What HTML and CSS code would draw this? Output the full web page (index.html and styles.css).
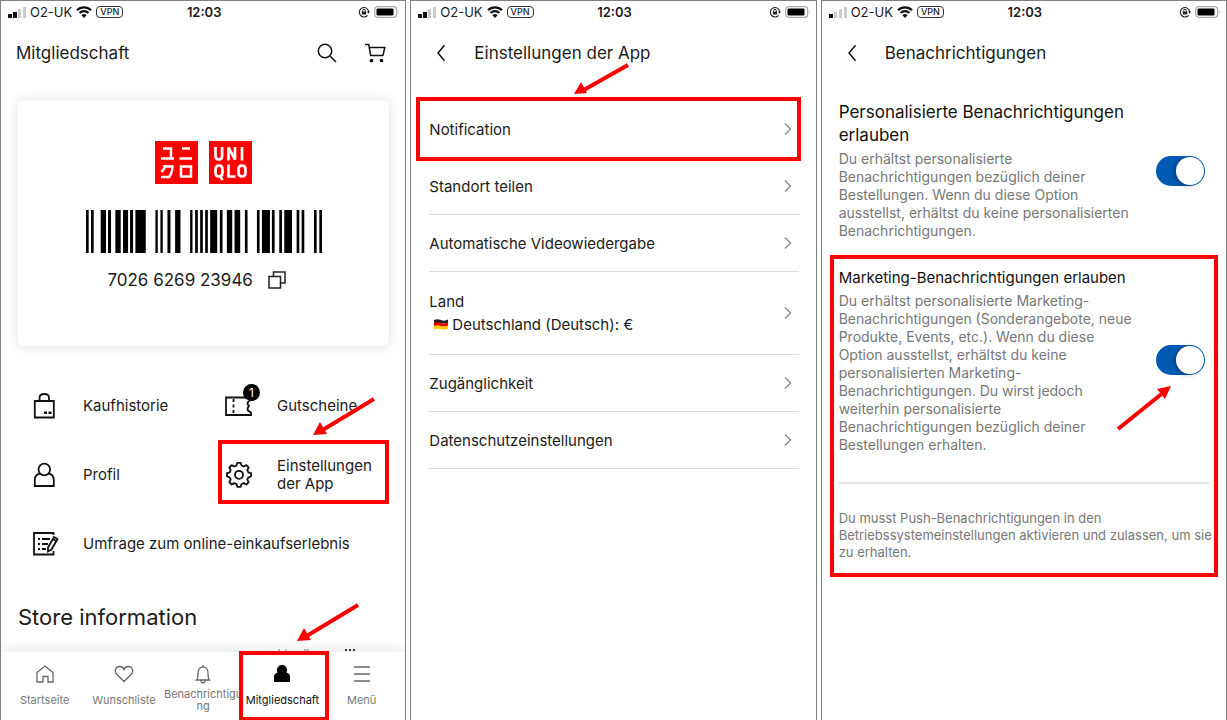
FILE: index.html
```html
<!DOCTYPE html>
<html lang="de">

<head>
    <meta charset="UTF-8">
    <meta name="viewport" content="width=device-width, initial-scale=1.0">
    <title>Mitgliedschaft</title>
    <link rel="stylesheet" href="styles.css">
</head>

<body>

    <!-- shared icons -->
    <svg class="sprite" aria-hidden="true">
        <symbol id="wifi" viewBox="0 0 16 12">
            <path d="M1 4.3a10 10 0 0 1 14 0M3.5 7a6.4 6.4 0 0 1 9 0" fill="none" stroke="#111" stroke-width="2.2" />
            <path d="M8 12 5.4 9.3a3.7 3.7 0 0 1 5.2 0z" fill="#111" />
        </symbol>
        <symbol id="lock" viewBox="0 0 12 12">
            <path d="M9.6 9.3A4.7 4.7 0 1 1 10.7 6" fill="none" stroke="#222" stroke-width="1.1" />
            <path d="M9 5.4h3L10.5 7.8zM3.8 5.6h4.4v3H3.8z" fill="#222" />
            <path d="M4.7 5.8V4.6a1.3 1.3 0 0 1 2.6 0v1.2" fill="none" stroke="#222" />
        </symbol>
        <symbol id="battery" viewBox="0 0 26 12">
            <rect x=".7" y=".7" width="22" height="10.6" rx="3" fill="#fff" stroke="#aaa" stroke-width="1.2" />
            <rect x="2.5" y="2.4" width="17" height="7.2" rx="1.3" fill="#000" />
            <path d="M24.2 4.2q1.4 1.8 0 3.6z" fill="#aaa" />
        </symbol>
        <symbol id="back" viewBox="0 0 10 18">
            <path d="M8.5 1.2 2 9l6.5 7.8" fill="none" stroke="#111" stroke-width="1.5" />
        </symbol>
        <symbol id="next" viewBox="0 0 8 14">
            <path d="M1 1.5 6.5 7 1 12.5" fill="none" stroke="#888" stroke-width="1.4" />
        </symbol>
    </svg>

    <div class="screens">

        <!-- Mitgliedschaft -->
        <section class="phone">
            <div class="status">
                <div class="status__left">
                    <svg class="status__signal" viewBox="0 0 18 11"><path d="M0 7h4v4H0zM5 5h4v6H5z" fill="#111" /><path d="M10 2h3v9h-3zM15 0h3v11h-3z" fill="#ccc" /></svg>
                    <span>O2-UK</span>
                    <svg class="status__wifi"><use href="#wifi" /></svg>
                    <span class="status__vpn">VPN</span>
                </div>
                <b class="status__time">12:03</b>
                <div class="status__right">
                    <svg class="status__lock"><use href="#lock" /></svg>
                    <svg class="status__battery"><use href="#battery" /></svg>
                </div>
            </div>

            <header class="header header--home">
                <h1 class="header__title">Mitgliedschaft</h1>
                <button class="icon-button" aria-label="Suche">
                    <svg width="20" height="20" viewBox="0 0 20 20" fill="none" stroke="#111" stroke-width="1.5"><circle cx="8" cy="8" r="6.7" /><path d="m13 13 6 6" /></svg>
                </button>
                <button class="icon-button" aria-label="Warenkorb">
                    <svg width="21" height="20" viewBox="0 0 21 20" fill="none" stroke="#111" stroke-width="1.5"><path d="M0 1.500h3.700L5.700 12.500h12.300M4.300 4.500h15.500l-1.800 8" /><circle cx="6.500" cy="17.500" r="1.100" fill="#111" /><circle cx="16.500" cy="17.500" r="1.100" fill="#111" /></svg>
                </button>
            </header>

            <main class="member">
                <div class="card">
                    <div class="card__logos">
                        <svg class="logo" viewBox="0 0 43 43" role="img" aria-label="ユニクロ">
                            <path d="M0 0h43v43H0z" fill="#f00" />
                            <path d="M8 7.500h8v10M6 17.500h13M27 7.500h8M24.500 17.500h12.500M9.500 24v3L6.500 31M8.500 25.500h9Q17 33 14 36H6M26 25.500h10v10h-10z" fill="none" stroke="#fff" stroke-width="2.500" />
                        </svg>
                        <svg class="logo" viewBox="0 0 43 43" role="img" aria-label="UNIQLO">
                            <path d="M0 0h43v43H0z" fill="#f00" />
                            <path d="M6.500 6v9q0 3.500 3.300 3.500t3.300-3.500V6M19.500 19.500V6.500l6.500 12V6M33 6v13.500M10 24.500q3.500 0 3.500 4v3q0 4-3.500 4t-3.500-4v-3q0-4 3.500-4zM10.500 34l3 5M19.500 23.500v12h7M33 24.500q3.500 0 3.500 4v3q0 4-3.500 4t-3.500-4v-3q0-4 3.500-4z" fill="none" stroke="#fff" stroke-width="2.700" />
                        </svg>
                    </div>
                    <svg class="card__barcode" viewBox="0 0 707 128" preserveAspectRatio="none" role="img" aria-label="Barcode">
                        <path d="M0 0h8v128h-8zM15 0h8v128h-8zM44 0h16v128h-16zM66 0h9v128h-9zM88 0h16v128h-16zM111 0h15v128h-15zM132 0h9v128h-9zM148 0h31v128h-31zM208 0h7v128h-7zM223 0h7v128h-7zM244 0h9v128h-9zM267 0h16v128h-16zM312 0h7v128h-7zM327 0h8v128h-8zM342 0h8v128h-8zM357 0h8v128h-8zM372 0h21v128h-21zM401 0h8v128h-8zM422 0h16v128h-16zM445 0h17v128h-17zM476 0h8v128h-8zM512 0h8v128h-8zM527 0h24v128h-24zM557 0h8v128h-8zM579 0h8v128h-8zM594 0h23v128h-23zM631 0h8v128h-8zM646 0h8v128h-8zM683 0h8v128h-8zM699 0h8v128h-8z" />
                    </svg>
                    <div class="card__number">
                        <span>7026 6269 23946</span>
                        <button class="icon-button" aria-label="Kopieren">
                            <svg width="18" height="18" viewBox="0 0 18 18" fill="none" stroke="#222" stroke-width="1.500"><path d="M1 5.500h11.500V17H1zM5.500 5V1H17v11h-4.500" /></svg>
                        </button>
                    </div>
                </div>

                <nav class="links">
                    <a class="link" href="#">
                        <svg class="link__icon" viewBox="-2 0 28 28"><path d="M1.800 9h19v16.500h-19zM6.500 9V6q0-4 4.800-4T16 6v3" /><path d="M11 19.500h3v2.500h-3zM15.500 19.500h3v2.500h-3z" fill="#111" stroke="none" /></svg>
                        <span>Kaufhistorie</span>
                    </a>
                    <a class="link" href="#">
                        <svg class="link__icon" viewBox="0 0 28 28"><path d="M1 5.500h25v2.500q-3.500 1.500-3.500 3.500 0 1 1.500 2.500-1.500 1.500-1.500 3 0 2 3.500 3.500v2.500H1z" /><path d="M8.500 7v15" stroke-dasharray="3 2.500" /></svg>
                        <span class="link__badge">1</span>
                        <span>Gutscheine</span>
                        <svg class="arrow arrow--settings" viewBox="0 0 62 40"><path d="M61 2 8 34" stroke="#f00" stroke-width="4" /><path d="m0 38 7-13 7 12z" fill="#f00" /></svg>
                    </a>
                    <a class="link" href="#">
                        <svg class="link__icon" viewBox="-2 0 28 28"><circle cx="11.300" cy="8.500" r="5.800" /><path d="M7 12.500q-5.200 1-5.200 6.500v6h19v-6q0-5.500-5.200-6.500" /></svg>
                        <span>Profil</span>
                    </a>
                    <a class="link" href="#">
                        <svg class="link__icon" viewBox="0 0 28 28" stroke-linejoin="round"><path d="m11.500 4.500.8-2.700h3.400l.8 2.700 2.300 1 2.500-1.400 2.400 2.400-1.400 2.500 1 2.300 2.700.8v3.400l-2.700.8-1 2.300 1.400 2.500-2.400 2.400-2.500-1.400-2.300 1-.8 2.700h-3.400l-.8-2.700-2.300-1-2.500 1.400-2.400-2.400 1.400-2.500-1-2.300-2.700-.8v-3.400l2.700-.8 1-2.300-1.400-2.500 2.400-2.400 2.500 1.400z" /><circle cx="14" cy="13.800" r="4" /></svg>
                        <span>Einstellungen der App</span>
                        <i class="mark mark--settings"></i>
                    </a>
                    <a class="link link--wide" href="#">
                        <svg class="link__icon" viewBox="-2 0 28 28"><path d="M20.500 5V3H1v21.500h19.500V21" /><path d="M5 9h2m2 0h8M5 14h2m2 0h6M5 19h2m2 0h4" /><path d="m15 17.500 6-10.500 3.500 2-6 10.500L15 21.500zM20 9l3 2" /></svg>
                        <span>Umfrage zum online-einkaufserlebnis</span>
                    </a>
                </nav>

                <h2 class="store">Store information</h2>
                <!-- next line, just showing over the tab bar -->
                <svg class="peek" viewBox="0 0 80 2"><path d="M0 1h2m5 0h2m17 0h5" stroke="#888" /><path d="M67 1h2m2 0h2m2 0h2" stroke="#333" stroke-width="2" /></svg>
            </main>

            <nav class="tabs">
                <a class="tab" href="#">
                    <svg class="tab__icon" viewBox="0 0 20 20"><path d="M2 8.500 10 2l8 6.500V18h-5v-5.500H8V18H2z" /></svg>
                    <span>Startseite</span>
                </a>
                <a class="tab" href="#">
                    <svg class="tab__icon" viewBox="0 0 20 20"><path d="M10 17.500 3 10.500C-.5 6.500 2 2.500 5.500 2.500 8 2.500 9.500 4 10 5.500c.5-1.500 2-3 4.500-3 3.500 0 6 4 2.500 8z" /></svg>
                    <span>Wunschliste</span>
                </a>
                <a class="tab" href="#">
                    <svg class="tab__icon" viewBox="0 0 20 20"><path d="M10 1v2M3.500 16c1.500-1.500 1.500-3 1.500-7 0-8 10-8 10 0 0 4 0 5.500 1.500 7zM8 16.500c0 3 4 3 4 0" /></svg>
                    <span>Benachrichtigung</span>
                </a>
                <a class="tab tab--active" href="#">
                    <svg class="tab__icon" viewBox="0 0 20 20"><path d="M10 1a5 5 0 0 1 4.500 7.500q3.500 1 3.500 4V18H2v-5.500q0-3 3.500-4A5 5 0 0 1 10 1z" /></svg>
                    <span>Mitgliedschaft</span>
                    <i class="mark mark--tab"></i>
                    <svg class="arrow arrow--tab" viewBox="0 0 62 40"><path d="M61 2 8 34" stroke="#f00" stroke-width="4" /><path d="m0 38 7-13 7 12z" fill="#f00" /></svg>
                </a>
                <a class="tab" href="#">
                    <svg class="tab__icon" viewBox="0 0 20 20"><path d="M2 3h16M2 10h16M2 17h16" /></svg>
                    <span>Menü</span>
                </a>
            </nav>
        </section>

        <!-- Einstellungen der App -->
        <section class="phone">
            <div class="status">
                <div class="status__left">
                    <svg class="status__signal" viewBox="0 0 18 11"><path d="M0 7h4v4H0zM5 5h4v6H5z" fill="#111" /><path d="M10 2h3v9h-3zM15 0h3v11h-3z" fill="#ccc" /></svg>
                    <span>O2-UK</span>
                    <svg class="status__wifi"><use href="#wifi" /></svg>
                    <span class="status__vpn">VPN</span>
                </div>
                <b class="status__time">12:03</b>
                <div class="status__right">
                    <svg class="status__lock"><use href="#lock" /></svg>
                    <svg class="status__battery"><use href="#battery" /></svg>
                </div>
            </div>

            <header class="header">
                <button class="icon-button" aria-label="Zurück"><svg width="10" height="18"><use href="#back" /></svg></button>
                <h1 class="header__title">Einstellungen der App</h1>
            </header>

            <main class="settings">
                <a class="row" href="#">
                    <span>Notification</span>
                    <svg class="row__next"><use href="#next" /></svg>
                    <i class="mark mark--row"></i>
                    <svg class="arrow arrow--row" viewBox="0 0 56 33"><path d="M54 2 8 28" stroke="#f00" stroke-width="4" /><path d="m0 31 7-12 6 11z" fill="#f00" /></svg>
                </a>
                <a class="row" href="#">
                    <span>Standort teilen</span>
                    <svg class="row__next"><use href="#next" /></svg>
                </a>
                <a class="row" href="#">
                    <span>Automatische Videowiedergabe</span>
                    <svg class="row__next"><use href="#next" /></svg>
                </a>
                <a class="row row--country" href="#">
                    <span>
                        Land
                        <span class="country">
                            <svg width="14" height="11" viewBox="0 0 14 11"><path d="M0 1q3.500-1.500 7 0t7-.5v4H0z" fill="#222" /><path d="M0 4q3.500-1.500 7 0t7-.5v4H0z" fill="#e00" /><path d="M0 7q3.500-1.500 7 0t7-.5v3.500q-3.500 1-7 .2T0 10.500z" fill="#fc0" /></svg>
                            Deutschland (Deutsch): €
                        </span>
                    </span>
                    <svg class="row__next"><use href="#next" /></svg>
                </a>
                <a class="row" href="#">
                    <span>Zugänglichkeit</span>
                    <svg class="row__next"><use href="#next" /></svg>
                </a>
                <a class="row" href="#">
                    <span>Datenschutzeinstellungen</span>
                    <svg class="row__next"><use href="#next" /></svg>
                </a>
            </main>
        </section>

        <!-- Benachrichtigungen -->
        <section class="phone">
            <div class="status">
                <div class="status__left">
                    <svg class="status__signal" viewBox="0 0 18 11"><path d="M0 7h4v4H0z" fill="#111" /><path d="M5 5h3v6H5zM10 2h3v9h-3zM15 0h3v11h-3z" fill="#ccc" /></svg>
                    <span>O2-UK</span>
                    <svg class="status__wifi"><use href="#wifi" /></svg>
                    <span class="status__vpn">VPN</span>
                </div>
                <b class="status__time">12:03</b>
                <div class="status__right">
                    <svg class="status__lock"><use href="#lock" /></svg>
                    <svg class="status__battery"><use href="#battery" /></svg>
                </div>
            </div>

            <header class="header">
                <button class="icon-button" aria-label="Zurück"><svg width="10" height="18"><use href="#back" /></svg></button>
                <h1 class="header__title">Benachrichtigungen</h1>
            </header>

            <main class="notices">
                <div class="notice">
                    <div class="notice__text">
                        <label class="notice__title notice__title--large" for="personal">Personalisierte Benachrichtigungen erlauben</label>
                        <p class="notice__info">Du erhältst personalisierte Benachrichtigungen bezüglich deiner Bestellungen. Wenn du diese Option ausstellst, erhältst du keine personalisierten Benachrichtigungen.</p>
                    </div>
                    <input class="switch" type="checkbox" id="personal" checked>
                </div>

                <div class="marketing">
                    <div class="notice">
                        <div class="notice__text">
                            <label class="notice__title" for="marketing">Marketing-Benachrichtigungen erlauben</label>
                            <p class="notice__info">Du erhältst personalisierte Marketing-Benachrichtigungen (Sonderangebote, neue Produkte, Events, etc.). Wenn du diese Option ausstellst, erhältst du keine personalisierten Marketing-Benachrichtigungen. Du wirst jedoch weiterhin personalisierte Benachrichtigungen bezüglich deiner Bestellungen erhalten.</p>
                        </div>
                        <input class="switch" type="checkbox" id="marketing" checked>
                    </div>
                    <hr class="notices__line">
                    <p class="notices__hint">Du musst Push-Benachrichtigungen in den Betriebssystemeinstellungen aktivieren und zulassen, um sie zu erhalten.</p>
                    <i class="mark mark--marketing"></i>
                    <svg class="arrow arrow--switch" viewBox="0 0 56 45"><path d="M2 43 48 6" stroke="#f00" stroke-width="4" /><path d="M55 0 41 3l8 10z" fill="#f00" /></svg>
                </div>
            </main>
        </section>

    </div>

</body>

</html>
```
FILE: styles.css
```css
* {
    box-sizing: border-box;
}

body {
    margin: 0;
    background: #fff;
    color: #1b1b1b;
    font-family: Inter, "Liberation Sans", sans-serif;
    font-size: 15px;
}

h1,
h2,
p {
    margin: 0;
    font-weight: 400;
}

a {
    color: inherit;
    text-decoration: none;
}

svg {
    display: block;
    flex: none;
}

.sprite {
    display: none;
}

.screens {
    display: flex;
    gap: 4px;
}

.phone {
    flex: 1;
    min-width: 0;
    height: 100vh;
    display: flex;
    flex-direction: column;
    overflow: hidden;
    border: 1px solid #808080;
    border-bottom: 0;
}

/* status bar */

.status {
    display: flex;
    align-items: center;
    height: 22px;
    padding: 0 5px 0 7px;
    font-size: 13px;
}

.status__left,
.status__right {
    flex: 1;
    display: flex;
    align-items: center;
    gap: 4px;
}

.status__right {
    justify-content: flex-end;
}

.status__signal {
    width: 18px;
    height: 11px;
}

.status__wifi {
    width: 16px;
    height: 12px;
}

.status__vpn {
    padding: 0 3px;
    border: 1px solid #333;
    border-radius: 4px;
    font-size: 9px;
    font-weight: 500;
    line-height: 10px;
}

.status__time {
    font-weight: 600;
}

.status__lock {
    width: 12px;
    height: 12px;
}

.status__battery {
    width: 26px;
    height: 12px;
}

/* header */

.header {
    display: flex;
    align-items: center;
    gap: 28px;
    height: 60px;
    padding: 0 18px 0 25px;
}

.header--home {
    padding: 0 19px 0 15px;
}

.header__title {
    flex: 1;
    font-size: 17px;
}

.icon-button {
    padding: 0;
    border: 0;
    background: none;
    cursor: pointer;
}

/* membership */

.member {
    flex: 1;
    min-height: 0;
    padding: 17px 16px 0 17px;
}

.card {
    display: flex;
    flex-direction: column;
    align-items: center;
    padding: 41px 0 55px;
    border-radius: 6px;
    box-shadow: 0 0 12px rgba(0, 0, 0, 0.12);
}

.card__logos {
    display: flex;
    gap: 11px;
}

.logo {
    width: 43px;
    height: 43px;
}

.card__barcode {
    width: 236px;
    height: 43px;
    margin-top: 26px;
}

.card__number {
    display: flex;
    align-items: center;
    gap: 15px;
    margin-top: 16px;
    padding-right: 14px;
    font-size: 17px;
    line-height: 22px;
}

.links {
    display: grid;
    grid-template-columns: 194px 1fr;
    grid-auto-rows: 69px;
    padding: 25px 0 0 13px;
}

.link {
    position: relative;
    display: flex;
    align-items: center;
    gap: 24px;
    line-height: 18px;
}

.link--wide {
    grid-column: span 2;
}

.link__icon {
    width: 28px;
    height: 28px;
    fill: none;
    stroke: #111;
    stroke-width: 1.8;
}

.link__badge {
    position: absolute;
    top: 13px;
    left: 18px;
    width: 17px;
    border-radius: 50%;
    background: #000;
    color: #fff;
    font-size: 12px;
    line-height: 17px;
    text-align: center;
}

.store {
    padding-top: 26px;
    font-size: 22px;
    line-height: 26px;
}

.peek {
    width: 80px;
    height: 2px;
    margin: 19px 0 0 260px;
}

.tabs {
    display: flex;
    height: 68px;
    padding: 0 4px;
    box-shadow: 0 -2px 12px rgba(0, 0, 0, 0.1);
}

.tab {
    position: relative;
    flex: 1;
    min-width: 0;
    display: flex;
    flex-direction: column;
    align-items: center;
    padding-top: 12px;
    color: #777;
    font-size: 11px;
    line-height: 12px;
    text-align: center;
}

.tab span {
    display: flex;
    align-items: center;
    height: 24px;
    margin-top: 4px;
    overflow-wrap: anywhere;
}

.tab__icon {
    width: 20px;
    height: 20px;
    fill: none;
    stroke: #666;
    stroke-width: 1.3;
}

.tab--active {
    color: #111;
}

.tab--active .tab__icon {
    fill: #000;
    stroke: none;
}

/* settings list */

.settings {
    padding: 18px 17px 0 18px;
}

.row {
    position: relative;
    display: flex;
    align-items: center;
    justify-content: space-between;
    height: 57px;
    padding-right: 7px;
    border-bottom: 1px solid #ddd;
    line-height: 23px;
}

.row--country {
    height: 83px;
}

.row__next {
    width: 8px;
    height: 14px;
}

.country {
    display: flex;
    align-items: center;
    gap: 4px;
    padding-left: 5px;
}

/* notifications */

.notices {
    padding: 18px 17px 0;
}

.notice {
    display: flex;
    align-items: center;
    justify-content: space-between;
    padding-right: 4px;
}

.notice__text {
    width: 296px;
}

.notice__title {
    display: block;
    color: #111;
    line-height: 23px;
}

.notice__title--large {
    font-size: 17px;
}

.notice__info {
    margin-top: 3px;
    color: #777;
    font-size: 14px;
    line-height: 18px;
}

.switch {
    appearance: none;
    flex: none;
    width: 49px;
    height: 30px;
    margin: 0;
    border-radius: 15px;
    background: #005ab4;
    cursor: pointer;
}

.switch::before {
    content: "";
    display: block;
    width: 28px;
    height: 28px;
    margin: 1px;
    border-radius: 50%;
    background: #fff;
}

.switch:checked::before {
    margin-left: 20px;
    box-shadow: -2px 1px 4px rgba(0, 0, 0, 0.3);
}

.marketing {
    position: relative;
    margin-top: 26px;
}

.notices__line {
    height: 2px;
    margin: 28px 0 26px;
    border: 0;
    background: #e5e5e5;
}

.notices__hint {
    margin-right: -8px;
    color: #777;
    font-size: 13px;
    line-height: 17px;
}

/* red marks and arrows */

.mark {
    position: absolute;
    border: 4px solid #f00;
    pointer-events: none;
}

.mark--settings {
    top: 0;
    right: 0;
    bottom: 5px;
    left: -7px;
}

.mark--tab {
    top: -1px;
    right: -7px;
    bottom: -1px;
    left: -4px;
}

.mark--row {
    top: -4px;
    right: -2px;
    bottom: -4px;
    left: -13px;
}

.mark--marketing {
    top: -11px;
    right: -9px;
    bottom: -16px;
    left: -9px;
}

.arrow {
    position: absolute;
    fill: none;
    stroke-width: 0;
}

.arrow--settings,
.arrow--tab {
    width: 62px;
    height: 40px;
}

.arrow--settings {
    top: 26px;
    left: 88px;
}

.arrow--tab {
    top: -49px;
    left: 54px;
}

.arrow--row {
    top: -38px;
    left: 145px;
    width: 56px;
    height: 33px;
}

.arrow--switch {
    top: 120px;
    right: 37px;
    width: 56px;
    height: 45px;
}
```
